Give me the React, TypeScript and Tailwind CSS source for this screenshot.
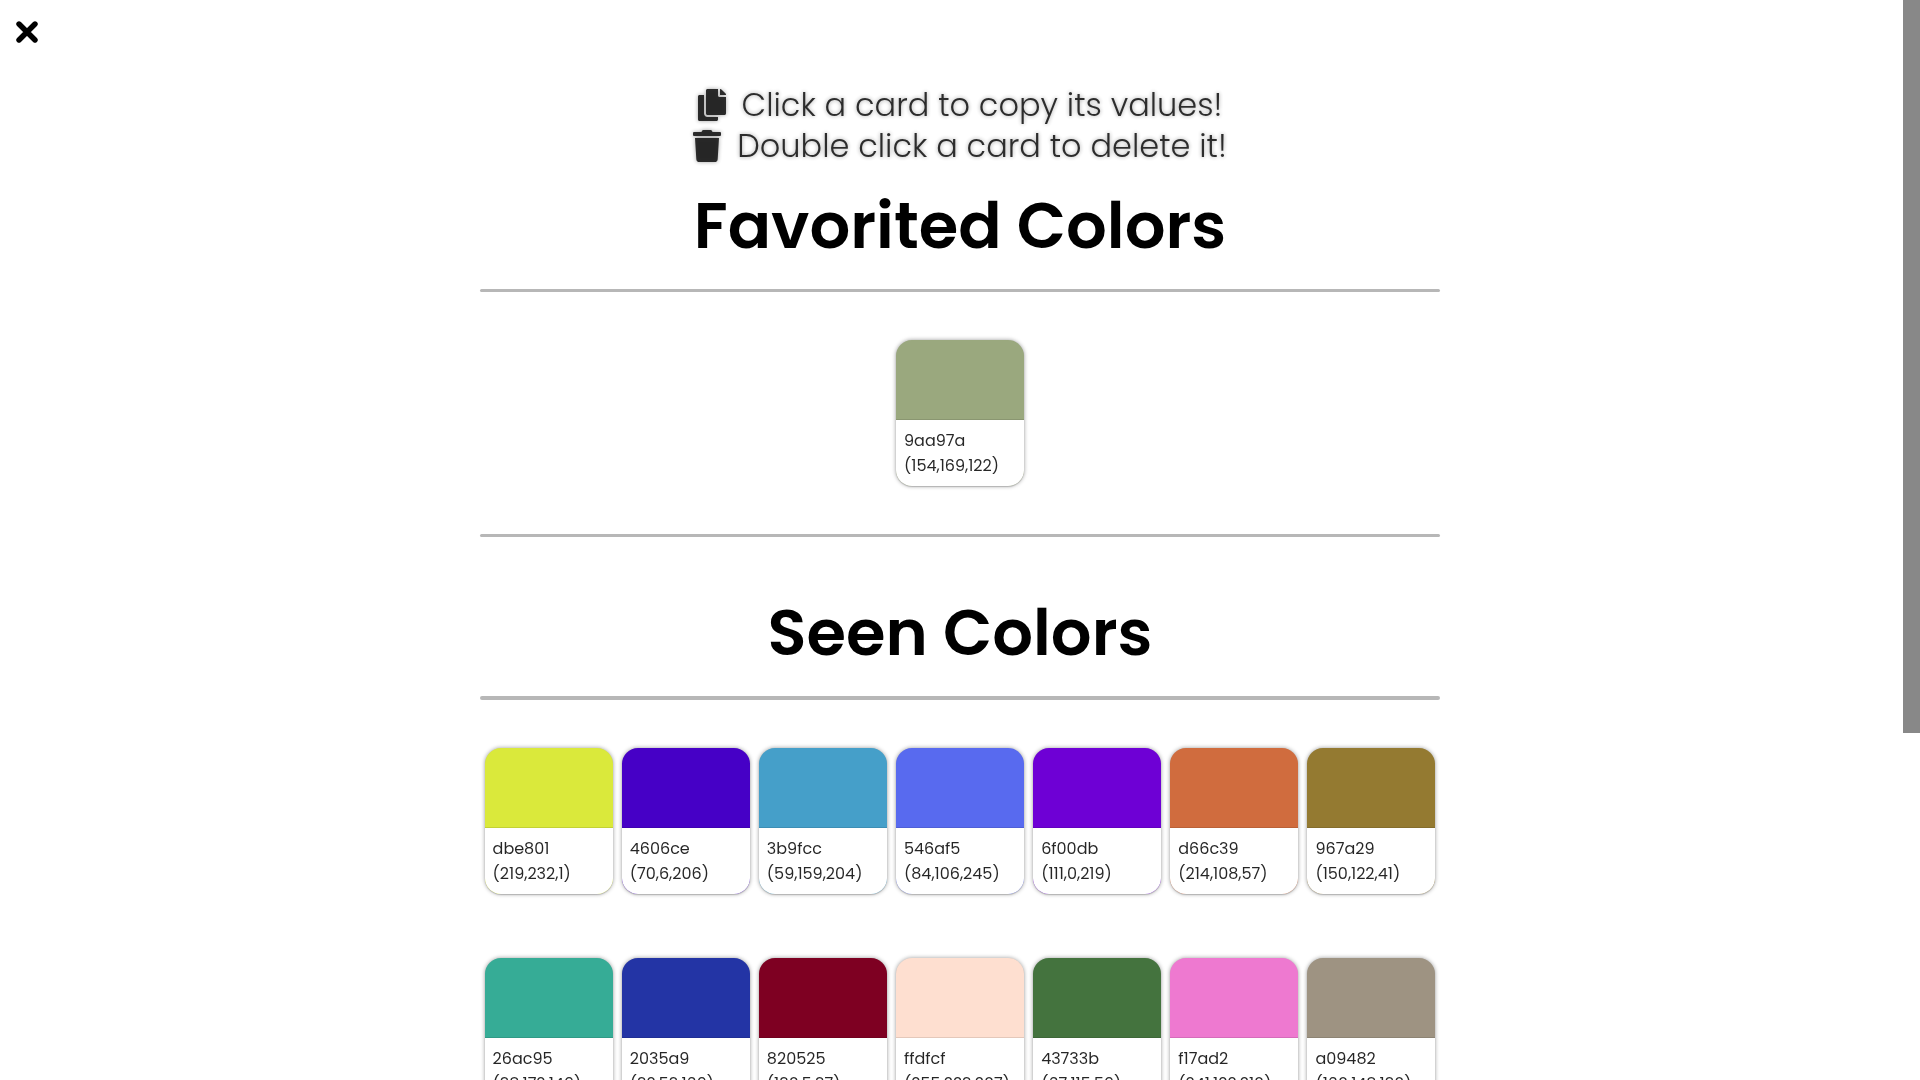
import React from "react";

type Color = { hex: string; rgb: string; swatch: string };

const favorites: Color[] = [
  { hex: "9aa97a", rgb: "(154,169,122)", swatch: "bg-[#9aa87e]" },
];

const seen: Color[] = [
  { hex: "dbe801", rgb: "(219,232,1)", swatch: "bg-[#dae93b]" },
  { hex: "4606ce", rgb: "(70,6,206)", swatch: "bg-[#4600c6]" },
  { hex: "3b9fcc", rgb: "(59,159,204)", swatch: "bg-[#459fc9]" },
  { hex: "546af5", rgb: "(84,106,245)", swatch: "bg-[#586aef]" },
  { hex: "6f00db", rgb: "(111,0,219)", swatch: "bg-[#6e00d5]" },
  { hex: "d66c39", rgb: "(214,108,57)", swatch: "bg-[#d06c3e]" },
  { hex: "967a29", rgb: "(150,122,41)", swatch: "bg-[#947a31]" },
  { hex: "26ac95", rgb: "(38,172,149)", swatch: "bg-[#36ac96]" },
  { hex: "2035a9", rgb: "(32,53,169)", swatch: "bg-[#2334a5]" },
  { hex: "820525", rgb: "(130,5,37)", swatch: "bg-[#7e0022]" },
  { hex: "ffdfcf", rgb: "(255,223,207)", swatch: "bg-[#fedfd0]" },
  { hex: "43733b", rgb: "(67,115,59)", swatch: "bg-[#44733e]" },
  { hex: "f17ad2", rgb: "(241,122,210)", swatch: "bg-[#ee79d0]" },
  { hex: "a09482", rgb: "(160,148,130)", swatch: "bg-[#9e9382]" },
];

function ColorCard({ color }: { color: Color }) {
  return (
    <button
      type="button"
      className={`flex w-32 flex-col overflow-hidden rounded-2xl text-left shadow-[0_0_4px_rgba(0,0,0,0.4),0_1px_1px_rgba(0,0,0,0.15)] ${color.swatch}`}
    >
      <span className="h-20 w-full border-b border-black/10" />
      <span className="w-full bg-white p-2 text-base leading-[25px]">
        <span className="block opacity-85">{color.hex}</span>
        <span className="block opacity-85">{color.rgb}</span>
      </span>
    </button>
  );
}

function Rule({ className }: { className: string }) {
  return <hr className={`w-full rounded-full border-0 bg-[#b7b7b7] ${className}`} />;
}

export default function App() {
  return (
    <div className="relative h-screen overflow-hidden bg-white font-[Poppins,Inter,sans-serif] text-black">
      <button type="button" aria-label="Close" className="absolute top-5 left-4 pt-px">
        <svg viewBox="0 0 22 22" className="size-[22px]" fill="none" stroke="black" strokeWidth="5.4" strokeLinecap="round" aria-hidden="true">
          <path d="M3 3 19 19M19 3 3 19" />
        </svg>
      </button>
      <div aria-hidden="true" className="absolute top-0 right-0 h-[733px] w-[17px] bg-[#888]" />

      <main className="mx-auto flex w-1/2 flex-col items-center pt-[84px]">
        <div className="flex flex-col items-center text-[32px] leading-[41px] font-light text-black/90 opacity-90 drop-shadow-[0_0_2px_rgba(0,0,0,0.45)]">
          <p className="flex items-center gap-4">
            <svg viewBox="0 0 448 512" className="h-8 w-7" fill="currentColor" aria-hidden="true">
              <path d="M320 448v40c0 13.255-10.745 24-24 24H24c-13.255 0-24-10.745-24-24V120c0-13.255 10.745-24 24-24h72v296c0 30.879 25.121 56 56 56h168zm0-344V0H152c-13.255 0-24 10.745-24 24v368c0 13.255 10.745 24 24 24h272c13.255 0 24-10.745 24-24V128H344c-13.2 0-24-10.8-24-24zm120.971-31.029L375.029 7.029A24 24 0 0 0 358.059 0H352v96h96v-6.059a24 24 0 0 0-7.029-16.97z" />
            </svg>
            Click a card to copy its values!
          </p>
          <p className="flex items-center gap-4">
            <svg viewBox="0 0 448 512" className="h-8 w-7" fill="currentColor" aria-hidden="true">
              <path d="M432 32H312l-9.400-18.700A24 24 0 0 0 281.100 0H166.800a23.720 23.720 0 0 0-21.400 13.300L136 32H16A16 16 0 0 0 0 48v32a16 16 0 0 0 16 16h416a16 16 0 0 0 16-16V48a16 16 0 0 0-16-16zM53.200 467a48 48 0 0 0 47.900 45h245.800a48 48 0 0 0 47.900-45L416 128H32z" />
            </svg>
            Double click a card to delete it!
          </p>
        </div>

        <h1 className="mt-3 text-[64px] leading-[96px] font-semibold">Favorited Colors</h1>
        <Rule className="mt-[15px] h-[3px]" />
        <section aria-label="Favorited Colors" className="flex flex-wrap justify-center py-12">
          {favorites.map((c) => (
            <ColorCard key={c.hex} color={c} />
          ))}
        </section>
        <Rule className="h-[3px]" />

        <h1 className="mt-12 text-[64px] leading-[96px] font-semibold">Seen Colors</h1>
        <Rule className="mt-[15px] h-1" />
        <section aria-label="Seen Colors" className="grid w-full grid-cols-7 justify-items-center gap-y-16 pt-12">
          {seen.map((c) => (
            <ColorCard key={c.hex} color={c} />
          ))}
        </section>
      </main>
    </div>
  );
}
